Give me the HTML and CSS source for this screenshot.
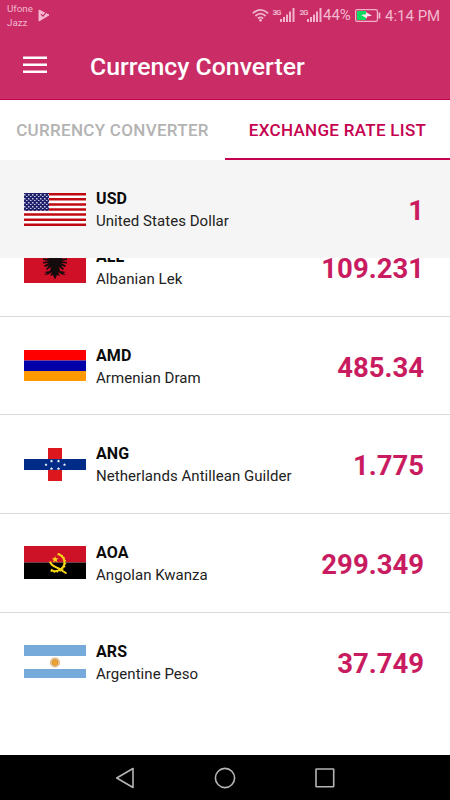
FILE: index.html
```
<!DOCTYPE html>
<html lang="en">
<head>
    <meta charset="UTF-8">
    <title>Currency Converter</title>
    <link rel="stylesheet" href="styles.css">
</head>
<body>
    <div class="app">
        <header class="header">
            <div class="status">
                <div class="carriers">
                    <div>Ufone</div>
                    <div>Jazz</div>
                </div>
                <svg class="play" width="12" height="13" viewBox="0 0 12 13">
                    <path d="M1 1L11 6L1 12Z" fill="#f5b9d0" stroke="#f5b9d0" stroke-linejoin="round"/>
                    <path d="M3 5.3L5 7.2L9 2.2" fill="none" stroke="#ca2c66" stroke-width="1.2"/>
                </svg>
                <svg class="signals" width="71" height="18" viewBox="0 0 71 18">
                    <g fill="none" stroke="#efb4ca" stroke-width="1.8">
                        <path d="M.8 6.3Q8.5-.6 16.2 6.300M3.4 9Q8.5 4.200 13.6 9M5.900 11.500Q8.500 9.300 11.100 11.500"/>
                    </g>
                    <circle cx="8.500" cy="13.300" r="1.400" fill="#efb4ca"/>
                    <g fill="#efb4ca">
                        <path d="M28 12h2v3h-2zM31 10h2v5h-2zM34 7.500h2v7.500h-2zM37 4.500h2v10.500h-2zM40.500 1h2v14h-2z"/>
                        <path d="M55 12h2v3h-2zM58 10h2v5h-2zM61 7.500h2v7.500h-2zM64 4.500h2v10.500h-2zM67.500 1h2v14h-2z"/>
                    </g>
                    <text class="net" x="20.500" y="7.500">3G</text>
                    <text class="net" x="47.500" y="7.500">2G</text>
                </svg>
                <span class="percent">44%</span>
                <svg class="battery" width="26" height="13" viewBox="0 0 26 13">
                    <rect x=".6" y=".6" width="21.800" height="11.800" rx="1.500" fill="none" stroke="#efb4ca" stroke-width="1.200"/>
                    <path d="M2 2h9v9H2z" fill="#0bdc60"/>
                    <path d="M23.500 3.500h1.800v6h-1.800z" fill="#efb4ca"/>
                    <path d="M6 6L11 5.300V3L17 6.700L12 7.600V9.500Z" fill="#ffe3ee"/>
                </svg>
                <span class="time">4:14 PM</span>
            </div>
            <div class="toolbar">
                <svg class="menu" width="24" height="18" viewBox="0 0 24 18">
                    <path d="M0 1.700H24M0 8.700H24M0 15.700H24" stroke="#fff" stroke-width="2.600"/>
                </svg>
                <h1>Currency Converter</h1>
            </div>
        </header>

        <nav class="tabs">
            <div class="tab">CURRENCY CONVERTER</div>
            <div class="tab active">EXCHANGE RATE LIST</div>
        </nav>

        <div class="row base">
            <svg class="flag" width="62" height="33" viewBox="0 0 62 33">
                <defs>
                    <pattern id="stars" width="4" height="4" patternUnits="userSpaceOnUse">
                        <path d="M0 1h1.500v1.400H0zM2 3h1.500v1H2z" fill="#c4c5e0"/>
                    </pattern>
                </defs>
                <path d="M0 0h62v33H0z" fill="#fff"/>
                <path d="M0 1.270H62M0 6.350H62M0 11.420H62M0 16.500H62M0 21.580H62M0 26.650H62M0 31.730H62" stroke="#c00a12" stroke-width="2.540"/>
                <path d="M0 0h25v17.700H0z" fill="#21216b"/>
                <path d="M0 0h25v17.700H0z" fill="url(#stars)"/>
            </svg>
            <div class="info">
                <div class="code">USD</div>
                <div class="name">United States Dollar</div>
            </div>
            <div class="value">1</div>
        </div>

        <div class="list">
            <div class="row first">
                <svg class="flag" width="62" height="33" viewBox="0 0 62 33">
                    <path d="M0 0h62v33H0z" fill="#d01027"/>
                    <path d="M31 6L28 2L25 4L28 6L26 8L19 5V6.500L25 9L19 8.500V10L25 11L19 12V13.500L25 13L20 15.500L21 17L25 15.500L22 19L23 20L27 17L26 21L20 22L23 23L20 25L24 24.500L28 22L26 26L29 25L31 29.500L33 25L36 26L34 22L38 24.500L42 25L39 23L42 22L36 21L35 17L39 20L40 19L37 15.500L41 17L42 15.500L37 13L43 13.500V12L37 11L43 10V8.500L37 9L43 6.500V5L36 8L34 6L37 4L34 2Z" fill="#130b0c"/>
                </svg>
                <div class="info">
                    <div class="code">ALL</div>
                    <div class="name">Albanian Lek</div>
                </div>
                <div class="value">109.231</div>
            </div>
            <div class="row">
                <svg class="flag" width="62" height="31" viewBox="0 0 62 31">
                    <path d="M0 0h62v10.500H0z" fill="#f00"/>
                    <path d="M0 10.500h62v10.500H0z" fill="#0000a9"/>
                    <path d="M0 21h62v10H0z" fill="#f90"/>
                </svg>
                <div class="info">
                    <div class="code">AMD</div>
                    <div class="name">Armenian Dram</div>
                </div>
                <div class="value">485.34</div>
            </div>
            <div class="row">
                <svg class="flag" width="62" height="33" viewBox="0 0 62 33">
                    <defs>
                        <path id="star" d="M0-1.600L.5-.5 1.500-.4.800.4 1 1.400 0 .9-1 1.400-.8.400-1.500-.4-.5-.5Z" fill="#fff"/>
                    </defs>
                    <path d="M0 0h62v33H0z" fill="#fff"/>
                    <path d="M24 0h14v33H24z" fill="#dc171d"/>
                    <path d="M0 11h62v11H0z" fill="#002b87"/>
                    <use href="#star" x="22" y="16.700"/>
                    <use href="#star" x="40.500" y="16.700"/>
                    <use href="#star" x="27.500" y="13"/>
                    <use href="#star" x="34.500" y="13"/>
                    <use href="#star" x="27.500" y="20.500"/>
                    <use href="#star" x="34.500" y="20.500"/>
                </svg>
                <div class="info">
                    <div class="code">ANG</div>
                    <div class="name">Netherlands Antillean Guilder</div>
                </div>
                <div class="value">1.775</div>
            </div>
            <div class="row">
                <svg class="flag" width="62" height="33" viewBox="0 0 62 33">
                    <path d="M0 0h62v16.500H0z" fill="#cd1126"/>
                    <path d="M0 16.500h62V33H0z"/>
                    <path d="M33.500 8C41.500 10 42.500 19 37 23C33 26 29 25.500 27 23.500" fill="none" stroke="#f9d616" stroke-width="2"/>
                    <path d="M34.500 8C42.500 10.500 43.500 20 38 23.500C34 26.500 29 26.500 26.500 24.500" fill="none" stroke="#f9d616" stroke-width="1.500" stroke-dasharray="1.500 1.500"/>
                    <path d="M26 15.500C27 20 31 20.500 35 22.500L42.500 27.500" fill="none" stroke="#f9d616" stroke-width="2"/>
                    <path d="M31 10l1 2.300 2.500-.1-1.900 1.700.9 2.400-2.300-1.300-2.100 1.500.6-2.500-2-1.600 2.500-.2z" fill="#f9d616"/>
                </svg>
                <div class="info">
                    <div class="code">AOA</div>
                    <div class="name">Angolan Kwanza</div>
                </div>
                <div class="value">299.349</div>
            </div>
            <div class="row last">
                <svg class="flag" width="62" height="33" viewBox="0 0 62 33">
                    <path d="M0 0h62v33H0z" fill="#fff"/>
                    <path d="M0 0h62v11H0zM0 24h62v9H0z" fill="#75aadb"/>
                    <circle cx="31" cy="17.500" r="4.300" fill="none" stroke="#e3bc88" stroke-width="1.600"/>
                    <circle cx="31" cy="17.500" r="3" fill="#eea32f" stroke="#c78630" stroke-width=".8"/>
                </svg>
                <div class="info">
                    <div class="code">ARS</div>
                    <div class="name">Argentine Peso</div>
                </div>
                <div class="value">37.749</div>
            </div>
        </div>

        <footer class="navbar">
            <svg width="20" height="22" viewBox="0 0 20 22"><path d="M18 1.500V20.500L1.700 11Z"/></svg>
            <svg width="22" height="22" viewBox="0 0 22 22"><circle cx="11" cy="11" r="9.600"/></svg>
            <svg width="20" height="20" viewBox="0 0 20 20"><rect x="1" y="1" width="17.700" height="17.700" rx=".5"/></svg>
        </footer>
    </div>
</body>
</html>
```
FILE: styles.css
```
* { box-sizing: border-box; }
body { margin: 0; font-family: Roboto, sans-serif; background: #fff; }
svg { display: block; flex: none; }
.app { display: flex; flex-direction: column; width: 450px; height: 800px; overflow: hidden; }

.header { height: 100px; background: #ca2c66; border-bottom: 1px solid #c0004f; }
.status { display: flex; height: 32px; padding-left: 7px; color: #f2b8ce; white-space: nowrap; }
.carriers { width: 31px; padding-top: 2px; font-size: 9.8px; line-height: 14px; }
.play { margin-top: 9px; }
.signals { margin: 7px 0 0 202px; }
.net { font-size: 8px; font-weight: 700; fill: #efb4ca; letter-spacing: -1.2px; }
.percent { width: 32px; padding-top: 5px; font-size: 15px; line-height: 20px; }
.battery { margin-top: 9px; }
.time { margin-left: 4px; padding-top: 6px; font-size: 15px; line-height: 20px; }
.toolbar { display: flex; height: 67px; padding-left: 23px; align-items: center; }
.menu { margin-bottom: 2px; }
h1 { margin: 2px 0 0 43px; font-size: 24.8px; font-weight: 500; color: #fff; white-space: nowrap; }

.tabs { display: flex; height: 60px; }
.tab { width: 225px; font-size: 17px; font-weight: 500; line-height: 61px; letter-spacing: 0.3px; text-align: center; white-space: nowrap; color: #b3b3b3; }
.tab.active { color: #c4004f; border-bottom: 2.5px solid #c4004f; }

.row { display: flex; flex: none; height: 98.7px; padding: 0 26px 0 24px; align-items: center; border-bottom: 1px solid #dadada; }
.row.last { border-bottom-color: transparent; }
.row.base { height: 98px; background: #f5f5f5; border-bottom: 0; }
.info { margin-left: 10px; padding-top: 2px; flex: 1; white-space: nowrap; }
.code { font-size: 16px; font-weight: 700; line-height: 22px; letter-spacing: 0.1px; color: #0b0b0b; }
.name { font-size: 15px; line-height: 22px; letter-spacing: 0.05px; color: #222; }
.value { padding-top: 3px; font-size: 27.5px; font-weight: 700; color: #c91c60; }

.list { display: flex; flex: 1; flex-direction: column; overflow: hidden; }
.row.first { margin-top: -40px; }

.navbar { display: flex; flex: none; height: 45px; padding: 0 115px; align-items: center; justify-content: space-between; background: #000; }
.navbar svg { fill: none; stroke: #b5b5b5; stroke-width: 1.6; stroke-linejoin: round; }
```
